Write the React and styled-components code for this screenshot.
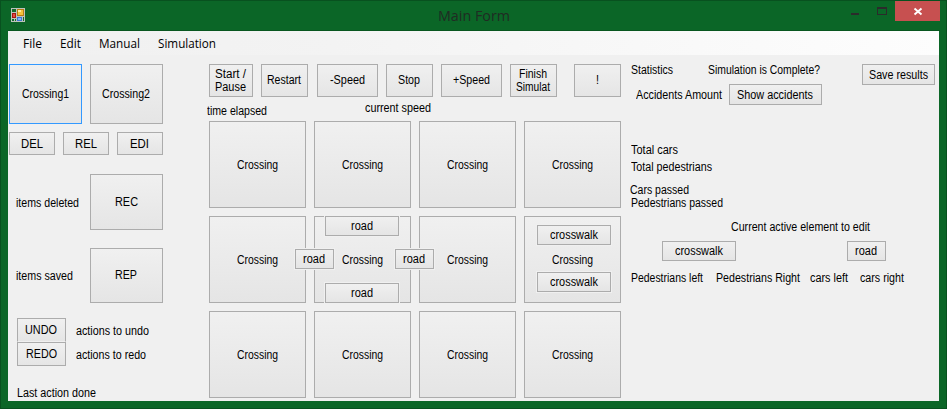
import React, { useLayoutEffect, useRef, useState } from "react";
import styled, { createGlobalStyle } from "styled-components";

const GlobalStyle = createGlobalStyle`
  * { box-sizing: border-box; }
  body { margin: 0; overflow: hidden; }
  button { font: inherit; color: inherit; margin: 0; }
`;

const Window = styled.div`
  width: 947px;
  height: 409px;
  display: flex;
  flex-direction: column;
  background: #0b6627;
  border: 1px solid #08511f;
  padding: 0 7px 7px;
  font: 12px/13px "Liberation Sans", Arial, sans-serif;
  color: #000;
`;

const TitleBar = styled.header`
  display: flex;
  height: 30px;
  margin-right: -1px;
  border-bottom: 1px solid #08561f;
  flex: none;
`;

const AppIcon = styled.svg`
  width: 14px;
  height: 14px;
  margin: 7px 0 0 3px;
`;

const Title = styled.h1`
  margin: 4px 0 0 413px;
  font: 15px/20px "Open Sans", "Noto Sans", sans-serif;
  color: #202b23;
`;

const Controls = styled.div`
  display: flex;
  margin-left: auto;
`;

const ControlButton = styled.button`
  border: 0;
  padding: 0;
  width: ${(p) => p.$w}px;
  height: 20px;
  background: ${(p) => (p.$close ? "#c75050" : "transparent")};
  svg { display: block; }
`;

const Client = styled.main`
  width: 931px;
  height: 370px;
  background: #f0f0f0;
`;

const MenuBar = styled.nav`
  display: flex;
  gap: 18px;
  height: 24px;
  padding: 4px 0 0 15px;
  background: linear-gradient(90deg, #f0f0f0, #f3f3f3 35%, #fdfdfd);
  font: 12px/17px "Open Sans", "Noto Sans", sans-serif;
`;

const Body = styled.div`
  display: flex;
  height: 346px;
  padding-top: 9px;
`;

const SidePanel = styled.section`
  width: 200px;
  padding-left: 1px;
`;

const GridPanel = styled.section`
  width: 413px;
  padding-left: 1px;
`;

const StatsPanel = styled.section`
  flex: 1;
  padding-left: 9px;
`;

const Row = styled.div`
  display: flex;
  align-items: flex-start;
  gap: ${(p) => p.$gap || 0}px;
  height: ${(p) => p.$h}px;
  margin-top: ${(p) => p.$mt || 0}px;
`;

const PushButton = styled.button`
  flex: none;
  display: flex;
  flex-direction: column;
  align-items: center;
  justify-content: center;
  width: ${(p) => p.$w}px;
  height: ${(p) => p.$h}px;
  margin-left: ${(p) => p.$ml || 0}px;
  padding: ${(p) => p.$drop || 0}px 1px 0 0;
  border: 1px solid ${(p) => (p.$focused ? "#3399ff" : "#acacac")};
  background: linear-gradient(#f0f0f0, #e5e5e5);
  ${(p) => p.$seam && "border-bottom-color: #f0f0f0;"}
`;

const Label = styled.span`
  flex: none;
  display: block;
  margin-left: ${(p) => p.$ml || 0}px;
  margin-top: ${(p) => p.$mt || 0}px;
`;

const Board = styled.div`
  display: grid;
  grid-template-columns: repeat(4, 97px);
  grid-auto-rows: 87px;
  gap: 8px;
`;

const Cell = styled.div`
  position: relative;
`;

const Overlay = styled.div`
  position: absolute;
  z-index: 1;
  left: ${(p) => p.$x}px;
  top: ${(p) => p.$y}px;
  box-shadow: 0 0 0 1px #f0f0f0;
`;

const FitBox = styled.span`
  display: block;
  width: ${(p) => p.$w}px;
  white-space: nowrap;
  text-align: left;
`;

const FitText = styled.span`
  display: inline-block;
  vertical-align: top;
  transform-origin: 0 0;
`;

// Condenses a caption horizontally so that it fills the width given.
function Fit({ w, children }) {
  const ref = useRef(null);
  const [scale, setScale] = useState(1);
  useLayoutEffect(() => {
    const natural = parseFloat(getComputedStyle(ref.current).width);
    if (natural) setScale(w / natural);
  }, [w, children]);
  return (
    <FitBox $w={w}>
      <FitText ref={ref} style={{ transform: `scaleX(${scale})` }}>{children}</FitText>
    </FitBox>
  );
}

function Btn({ w, h, ml, focused, seam, drop, lines }) {
  return (
    <PushButton $w={w} $h={h} $ml={ml} $focused={focused} $seam={seam} $drop={drop}>
      {lines.map(([text, width]) => <Fit key={text} w={width}>{text}</Fit>)}
    </PushButton>
  );
}

function Text({ w, ml, mt, children }) {
  return <Label $ml={ml} $mt={mt}><Fit w={w}>{children}</Fit></Label>;
}

const toolbar = [
  { w: 44, ml: 0, lines: [["Start /", 31], ["Pause", 31]] },
  { w: 47, ml: 8, lines: [["Restart", 34]] },
  { w: 61, ml: 9, lines: [["-Speed", 35]] },
  { w: 47, ml: 8, lines: [["Stop", 22]] },
  { w: 61, ml: 8, lines: [["+Speed", 37]] },
  { w: 47, ml: 8, lines: [["Finish", 28], ["Simulat", 34]] },
  { w: 47, ml: 17, lines: [["!", 3]] },
];

const road = [["road", 22]];
const crosswalk = [["crosswalk", 48]];

const overlays = {
  5: [
    { x: 11, y: 0, w: 74, lines: road },
    { x: -19, y: 33, w: 39, lines: road },
    { x: 81, y: 33, w: 39, lines: road },
    { x: 11, y: 67, w: 74, lines: road },
  ],
  7: [
    { x: 13, y: 9, w: 74, lines: crosswalk },
    { x: 13, y: 56, w: 74, lines: crosswalk },
  ],
};

export default function App() {
  return (
    <Window>
      <GlobalStyle />
      <TitleBar>
        <AppIcon viewBox="0 0 14 14" shapeRendering="crispEdges">
          <path d="M0 0h14v14H0z" fill="#bdc3bd" />
          <path d="M1 1h4v3H1zM1 11h2v2H1zM4 11h1v2H4zM12 9h1v4h-1z" fill="#146b2d" />
          <path d="M6 1h7v7H6z" fill="#b87b12" />
          <path d="M7 2h5v5H7z" fill="#f5c13b" />
          <path d="M7 2h3v2H7z" fill="#ffe9a0" />
          <path d="M1 5h4v5H1z" fill="#a51616" />
          <path d="M2 6h2v3H2z" fill="#e34a41" />
          <path d="M6 9h5v4H6z" fill="#3c75cf" />
          <path d="M7 10h3v2H7z" fill="#82b3f4" />
        </AppIcon>
        <Title><Fit w={72}>Main Form</Fit></Title>
        <Controls>
          <ControlButton $w={27} aria-label="Minimize">
            <svg width="27" height="20" shapeRendering="crispEdges"><path d="M10 12h8v2h-8z" fill="#2b2b2b" /></svg>
          </ControlButton>
          <ControlButton $w={27} aria-label="Maximize">
            <svg width="27" height="20" shapeRendering="crispEdges"><path fillRule="evenodd" d="M9 6h10v8H9zM10 8v5h8V8z" fill="#2b2b2b" /></svg>
          </ControlButton>
          <ControlButton $w={45} $close aria-label="Close">
            <svg width="45" height="20"><path d="M19.5 7.5l7 6M26.5 7.5l-7 6" stroke="#fff" strokeWidth="1.9" /></svg>
          </ControlButton>
        </Controls>
      </TitleBar>

      <Client>
        <MenuBar>
          <Fit w={19}>File</Fit>
          <Fit w={21}>Edit</Fit>
          <Fit w={41}>Manual</Fit>
          <Fit w={58}>Simulation</Fit>
        </MenuBar>

        <Body>
          <SidePanel>
            <Row $h={60} $gap={8}>
              <Btn w={73} h={60} focused lines={[["Crossing1", 47]]} />
              <Btn w={73} h={60} lines={[["Crossing2", 48]]} />
            </Row>
            <Row $h={23} $mt={8} $gap={8}>
              <Btn w={46} h={23} drop={1} lines={[["DEL", 22]]} />
              <Btn w={46} h={23} drop={1} lines={[["REL", 22]]} />
              <Btn w={46} h={23} drop={1} lines={[["EDI", 19]]} />
            </Row>
            <Row $h={56} $mt={19}>
              <Text w={63} ml={7} mt={23}>items deleted</Text>
              <Btn w={73} h={56} ml={11} lines={[["REC", 23]]} />
            </Row>
            <Row $h={55} $mt={18}>
              <Text w={57} ml={7} mt={22}>items saved</Text>
              <Btn w={73} h={55} ml={17} lines={[["REP", 22]]} />
            </Row>
            <Row $h={24} $mt={15}>
              <Btn w={49} h={24} ml={8} seam lines={[["UNDO", 32]]} />
              <Text w={73} ml={10} mt={7}>actions to undo</Text>
            </Row>
            <Row $h={24}>
              <Btn w={49} h={24} ml={8} lines={[["REDO", 31]]} />
              <Text w={70} ml={10} mt={7}>actions to redo</Text>
            </Row>
            <Row $h={13} $mt={21}>
              <Text w={79} ml={8}>Last action done</Text>
            </Row>
          </SidePanel>

          <GridPanel>
            <Row $h={33}>
              {toolbar.map((b) => <Btn key={b.lines[0][0]} h={33} {...b} />)}
            </Row>
            <Row $h={24}>
              <Text w={60} ml={-2} mt={8}>time elapsed</Text>
              <Text w={66} ml={98} mt={5}>current speed</Text>
            </Row>
            <Board>
              {Array.from({ length: 12 }, (_, i) => (
                <Cell key={i}>
                  <Btn w={97} h={87} drop={2} lines={[["Crossing", 41]]} />
                  {(overlays[i] || []).map((o) => (
                    <Overlay key={`${o.x}:${o.y}`} $x={o.x} $y={o.y}>
                      <Btn w={o.w} h={20} lines={o.lines} />
                    </Overlay>
                  ))}
                </Cell>
              ))}
            </Board>
          </GridPanel>

          <StatsPanel>
            <Row $h={20}>
              <Text w={42} ml={1}>Statistics</Text>
              <Text w={112} ml={35}>Simulation is Complete?</Text>
              <Btn w={73} h={21} ml={42} drop={2} lines={[["Save results", 59]]} />
            </Row>
            <Row $h={21}>
              <Text w={86} ml={6} mt={5}>Accidents Amount</Text>
              <Btn w={93} h={21} ml={7} drop={2} lines={[["Show accidents", 76]]} />
            </Row>
            <Row $h={13} $mt={39}><Text w={47} ml={1}>Total cars</Text></Row>
            <Row $h={13} $mt={4}><Text w={81} ml={1}>Total pedestrians</Text></Row>
            <Row $h={13} $mt={10}><Text w={59}>Cars passed</Text></Row>
            <Row $h={13}><Text w={92} ml={1}>Pedestrians passed</Text></Row>
            <Row $h={13} $mt={11}><Text w={139} ml={101}>Current active element to edit</Text></Row>
            <Row $h={20} $mt={7}>
              <Btn w={74} h={20} ml={32} lines={crosswalk} />
              <Btn w={39} h={20} ml={111} lines={road} />
            </Row>
            <Row $h={13} $mt={11}>
              <Text w={72} ml={1}>Pedestrians left</Text>
              <Text w={84} ml={13}>Pedestrians Right</Text>
              <Text w={38} ml={10}>cars left</Text>
              <Text w={44} ml={12}>cars right</Text>
            </Row>
          </StatsPanel>
        </Body>
      </Client>
    </Window>
  );
}
